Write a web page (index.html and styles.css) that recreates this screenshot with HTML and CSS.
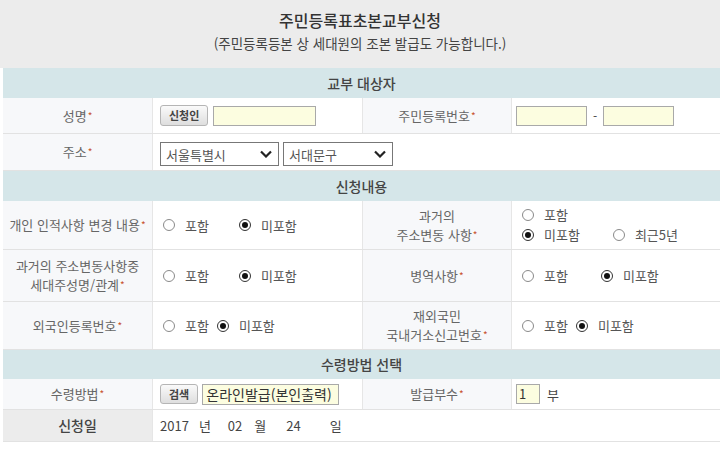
FILE: index.html
```html
<!DOCTYPE html>
<html lang="ko">
<head>
    <meta charset="UTF-8">
    <title>주민등록표초본교부신청</title>
    <link rel="stylesheet" href="styles.css">
</head>
<body>
    <div id="header">
        <h1>주민등록표초본교부신청</h1>
        <p>(주민등록등본 상 세대원의 조본 발급도 가능합니다.)</p>
    </div>
    <div id="form">
        <div class="section">교부 대상자</div>
        <div class="row h-name">
            <div class="label"><span>성명<span class="req">*</span></span></div>
            <div class="value">
                <span class="btn">신청인</span>
                <span class="field name-field"></span>
            </div>
            <div class="label"><span>주민등록번호<span class="req">*</span></span></div>
            <div class="value v2">
                <span class="field id-field"></span>
                <span class="dash">-</span>
                <span class="field id-field"></span>
            </div>
        </div>
        <div class="row h-addr">
            <div class="label"><span>주소<span class="req">*</span></span></div>
            <div class="value span3 addr">
                <div class="select sel-city"><span>서울특별시</span>
                    <svg width="12" height="8" viewBox="0 0 12 8"><path d="M1 1.5 L6 6.5 L11 1.5" fill="none" stroke="#222" stroke-width="2.2"/></svg>
                </div>
                <div class="select sel-gu"><span>서대문구</span>
                    <svg width="12" height="8" viewBox="0 0 12 8"><path d="M1 1.5 L6 6.5 L11 1.5" fill="none" stroke="#222" stroke-width="2.2"/></svg>
                </div>
            </div>
        </div>

        <div class="section">신청내용</div>
        <div class="row h-r1">
            <div class="label"><span>개인 인적사항 변경 내용<span class="req">*</span></span></div>
            <div class="value radios wide">
                <span class="opt"><i class="radio"></i>포함</span>
                <span class="opt"><i class="radio on"></i>미포함</span>
            </div>
            <div class="label"><span>과거의<br>주소변동 사항<span class="req">*</span></span></div>
            <div class="value v2 stack">
                <span class="opt"><i class="radio"></i>포함</span>
                <div class="radios recent">
                    <span class="opt"><i class="radio on"></i>미포함</span>
                    <span class="opt"><i class="radio"></i>최근5년</span>
                </div>
            </div>
        </div>
        <div class="row h-r2">
            <div class="label"><span>과거의 주소변동사항중<br>세대주성명/관계<span class="req">*</span></span></div>
            <div class="value radios wide">
                <span class="opt"><i class="radio"></i>포함</span>
                <span class="opt"><i class="radio on"></i>미포함</span>
            </div>
            <div class="label"><span>병역사항<span class="req">*</span></span></div>
            <div class="value v2 radios wide2">
                <span class="opt"><i class="radio"></i>포함</span>
                <span class="opt"><i class="radio on"></i>미포함</span>
            </div>
        </div>
        <div class="row h-r3">
            <div class="label"><span>외국인등록번호<span class="req">*</span></span></div>
            <div class="value radios tight">
                <span class="opt"><i class="radio"></i>포함</span>
                <span class="opt"><i class="radio on"></i>미포함</span>
            </div>
            <div class="label"><span>재외국민<br>국내거소신고번호<span class="req">*</span></span></div>
            <div class="value v2 radios tight">
                <span class="opt"><i class="radio"></i>포함</span>
                <span class="opt"><i class="radio on"></i>미포함</span>
            </div>
        </div>

        <div class="section short">수령방법 선택</div>
        <div class="row h-recv">
            <div class="label"><span>수령방법<span class="req">*</span></span></div>
            <div class="value">
                <span class="btn btn-search">검색</span>
                <span class="field recv-field">온라인발급(본인출력)</span>
            </div>
            <div class="label"><span>발급부수<span class="req">*</span></span></div>
            <div class="value v2">
                <span class="field count-field">1</span>
                <span class="unit">부</span>
            </div>
        </div>
        <div class="row h-date">
            <div class="label strong">신청일</div>
            <div class="value span3 date">
                <span>2017</span><span class="d-y">년</span>
                <span class="d-m">02</span><span class="d-mu">월</span>
                <span class="d-d">24</span><span class="d-du">일</span>
            </div>
        </div>
    </div>
</body>
</html>
```

FILE: styles.css
```css
body {
    margin: 0;
    padding: 0;
    font-family: "Noto Sans CJK KR", "Noto Sans", sans-serif;
    background-color: #FFFFFF;
    color: #444;
    font-size: 13px;
}

#header {
    height: 68px;
    background-color: #ececec;
    text-align: center;
    box-sizing: border-box;
    padding-top: 9px;
}

#header h1 {
    margin: 0;
    font-size: 16px;
    font-weight: 500;
    color: #333;
    line-height: 22px;
}

#header p {
    margin: 3px 0 0 0;
    font-size: 13.5px;
    color: #444;
    line-height: 18px;
}

#form {
    margin-left: 3px;
}

.section {
    height: 30px;
    background-color: #d5e6e9;
    text-align: center;
    line-height: 30px;
    font-size: 14px;
    font-weight: 500;
    color: #444;
}

.section.short {
    height: 29px;
    line-height: 29px;
}

.row {
    display: grid;
    grid-template-columns: 150px 209px 150px 1fr;
    border-bottom: 1px solid #e2e2e2;
    box-sizing: border-box;
}

.h-name { height: 36px; }
.h-addr { height: 37px; }
.h-r1 { height: 49px; }
.h-r2 { height: 52px; }
.h-r3 { height: 48px; }
.h-recv { height: 31px; }
.h-date { height: 32px; }

.label {
    background-color: #f7f8fa;
    border-right: 1px solid #e6e6e6;
    display: flex;
    justify-content: center;
    align-items: center;
    text-align: center;
    white-space: nowrap;
    font-size: 13px;
    line-height: 19px;
    color: #666;
}

.value + .label {
    border-left: 1px solid #e6e6e6;
}

.label.strong {
    background-color: #ececec;
    color: #444;
    font-size: 14px;
    font-weight: 500;
}

.req {
    color: #c8522e;
    font-size: 10px;
    margin-left: 1px;
    position: relative;
    top: -1px;
}

.value {
    display: flex;
    align-items: center;
    padding-left: 7px;
    color: #444;
}

.value.v2 {
    padding-left: 4px;
}

.span3 {
    grid-column: span 3;
}

.btn {
    display: inline-block;
    height: 19px;
    line-height: 19px;
    padding: 0 8px;
    border: 1px solid #b5b5b5;
    border-radius: 3px;
    background: linear-gradient(#fafafa, #dedede);
    font-size: 11px;
    font-weight: 700;
    color: #444;
    margin-right: 5px;
}

.btn-search {
    height: 18px;
    line-height: 18px;
    padding: 0 8px;
    margin-right: 4px;
}

.field {
    display: inline-block;
    box-sizing: border-box;
    height: 20px;
    border: 1px solid #a9a9a9;
    background-color: #fcfde0;
}

.name-field { width: 103px; }
.id-field { width: 71px; }
.dash { margin: 0 6px; font-size: 12px; }

.addr {
    padding-top: 4px;
}

.select {
    box-sizing: border-box;
    height: 24px;
    border: 1px solid #777;
    background: #fff;
    display: flex;
    align-items: center;
    justify-content: space-between;
    padding: 0 6px 0 5px;
    font-size: 13px;
    color: #555;
    margin-right: 4px;
}

.sel-city { width: 119px; }
.sel-gu { width: 110px; }

.radios {
    display: flex;
    align-items: center;
}

.value.radios {
    padding-left: 10px;
}

.value.v2.radios {
    padding-left: 10px;
}

.wide { gap: 30px; }
.wide2 { gap: 33px; }
.tight { gap: 8px; }
.recent { gap: 33px; }

.stack {
    flex-direction: column;
    align-items: flex-start;
    justify-content: center;
    line-height: 20px;
}

.value.v2.stack {
    padding-left: 10px;
}

.opt {
    display: inline-flex;
    align-items: center;
    gap: 10px;
    font-size: 13px;
    color: #555;
}

.radio {
    display: inline-block;
    width: 12px;
    height: 12px;
    box-sizing: border-box;
    border: 1px solid #8a8a8a;
    border-radius: 50%;
    background: #fff;
    position: relative;
}

.radio.on {
    border-color: #333;
}

.radio.on::after {
    content: "";
    position: absolute;
    left: 2px;
    top: 2px;
    width: 6px;
    height: 6px;
    border-radius: 50%;
    background: #111;
}

.recv-field {
    width: 137px;
    height: 21px;
    line-height: 19px;
    font-size: 14px;
    color: #333;
    padding-left: 3px;
}

.count-field {
    width: 24px;
    height: 20px;
    line-height: 18px;
    padding-left: 2px;
    font-size: 13px;
    color: #333;
}

.unit {
    margin-left: 7px;
    font-size: 13px;
}

.date {
    font-size: 13px;
    color: #444;
}

.d-y { margin-left: 10px; }
.d-m { margin-left: 17px; }
.d-mu { margin-left: 12px; }
.d-d { margin-left: 20px; }
.d-du { margin-left: 29px; }
```
